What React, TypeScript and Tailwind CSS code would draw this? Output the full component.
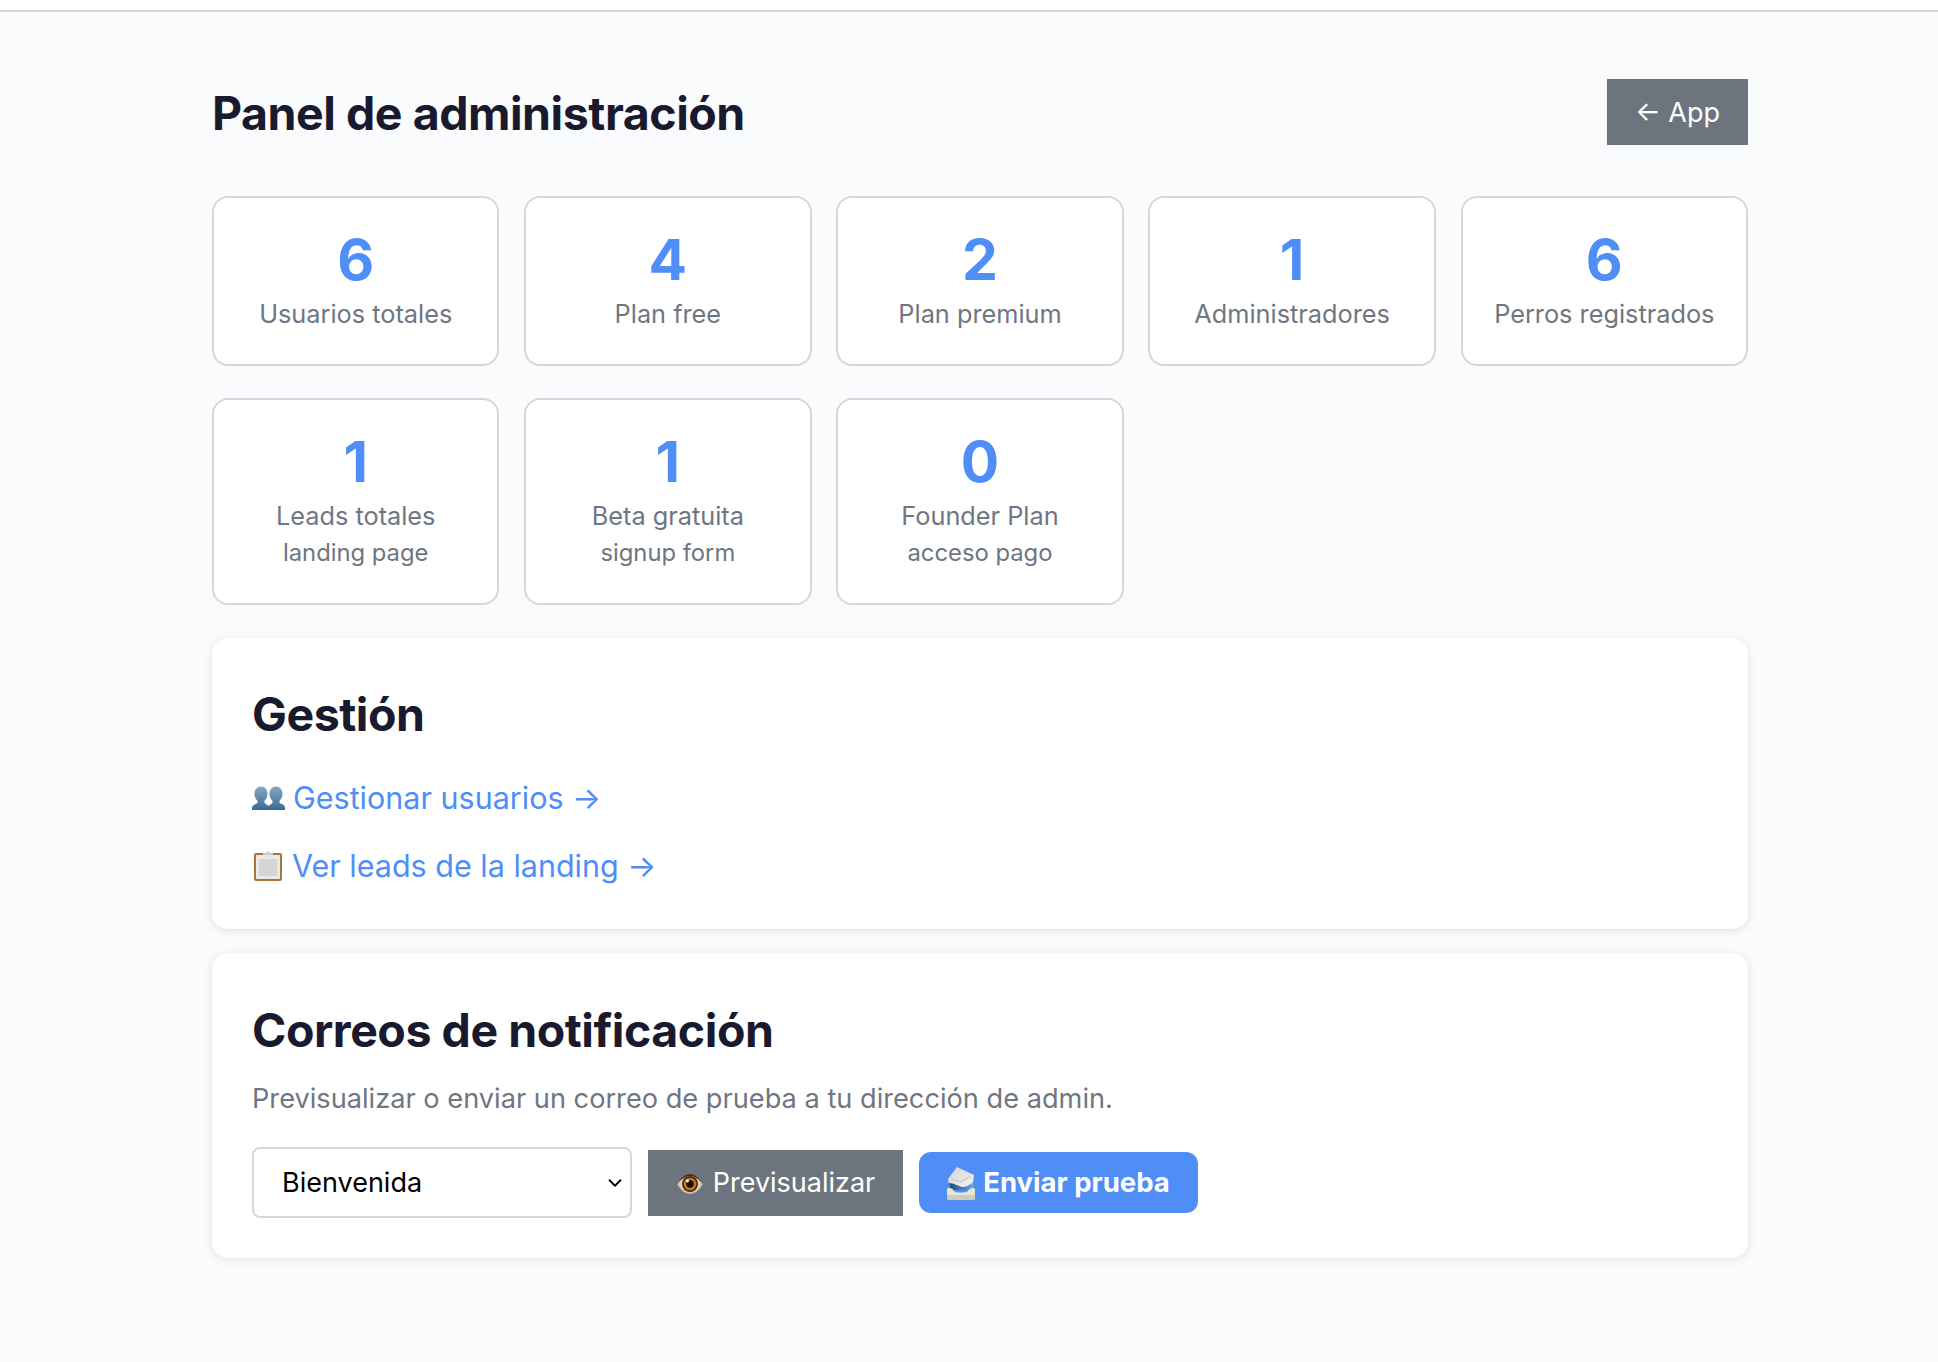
import { ChevronDown } from "lucide-react";

const stats = [
  { value: "6", label: "Usuarios totales" },
  { value: "4", label: "Plan free" },
  { value: "2", label: "Plan premium" },
  { value: "1", label: "Administradores" },
  { value: "6", label: "Perros registrados" },
  { value: "1", label: "Leads totales", sub: "landing page" },
  { value: "1", label: "Beta gratuita", sub: "signup form" },
  { value: "0", label: "Founder Plan", sub: "acceso pago" },
];

const PeopleIcon = () => (
  <svg width="33" height="26" viewBox="0 0 33 26" className="shrink-0">
    <defs>
      <linearGradient id="people" x1="0" y1="0" x2="0" y2="1">
        <stop offset="0" stopColor="#86a9c6" />
        <stop offset="1" stopColor="#3d6a92" />
      </linearGradient>
    </defs>
    <path
      d="M24 1.500c4 0 6.500 3.200 6.500 7.500 0 3-1.300 5.300-3 6.800v2.200c1.500.8 5.500 1.800 5.500 4.500V25H15v-2.500c1-2 4.500-3.500 5.500-4.500v-2.200c-1.700-1.500-3-3.800-3-6.800 0-4.300 2.500-7.500 6.500-7.500z"
      fill="url(#people)"
    />
    <path
      d="M9 1.500c4 0 6.500 3.200 6.500 7.500 0 3-1.300 5.300-3 6.800v2.200c1 1 4.500 2.500 5.500 4.500V25H0v-2.500c0-2.700 4-3.700 5.500-4.500v-2.200c-1.700-1.500-3-3.800-3-6.800 0-4.300 2.500-7.500 6.500-7.500z"
      fill="url(#people)"
    />
  </svg>
);

const ClipboardIcon = () => (
  <svg width="32" height="32" viewBox="0 0 32 32" className="shrink-0">
    <rect x="2" y="3" width="28" height="28" rx="2" fill="#a9743f" />
    <rect x="4" y="5" width="24" height="24" fill="#e8e8e8" />
    <rect x="7" y="9" width="18" height="17" fill="#d4d4d4" />
    <path d="M11 5V3h3l2-2 2 2h3v2z" fill="#c9ccd0" />
  </svg>
);

const EyeIcon = () => (
  <svg width="28" height="22" viewBox="0 0 28 22" className="shrink-0">
    <defs>
      <radialGradient id="sclera">
        <stop offset="0.5" stopColor="#f4eee8" />
        <stop offset="1" stopColor="#c9a9a0" />
      </radialGradient>
    </defs>
    <path d="M1 11C5 4 10 1 14 1s9 3 13 10c-4 7-9 10-13 10S5 18 1 11z" fill="url(#sclera)" />
    <path d="M1 11C5 4 10 1 14 1s9 3 13 10C23 6 18 3 14 3S5 6 1 11z" fill="#3d2c20" />
    <circle cx="14" cy="11" r="8" fill="#4a2d10" />
    <circle cx="14" cy="11" r="6.300" fill="#b9781c" />
    <circle cx="14" cy="11" r="3.700" fill="#1a0f07" />
    <circle cx="11.500" cy="8" r="1.400" fill="#ffffff" />
  </svg>
);

const MailIcon = () => (
  <svg width="28" height="34" viewBox="0 0 28 34" className="shrink-0">
    <defs>
      <linearGradient id="letter" x1="0" y1="0" x2="1" y2="1">
        <stop offset="0" stopColor="#d3d5d6" />
        <stop offset="1" stopColor="#f3f3f1" />
      </linearGradient>
      <linearGradient id="wave" x1="0" y1="0" x2="1" y2="0">
        <stop offset="0" stopColor="#1b4a7c" />
        <stop offset="1" stopColor="#6aa6d6" />
      </linearGradient>
    </defs>
    <path d="M1 13 10 1l17 8-2 15H3z" fill="url(#letter)" />
    <path d="M4 13 14 16 24 10" fill="none" stroke="#bfc3c6" strokeWidth="1" />
    <path d="M2 17c5 0 9 3 13 4 4 0 8-2 11-5l-1 8H3z" fill="url(#wave)" />
    <path d="M1 22c4 0 5 1 6 3 2 2 12 2 14 0 1-2 2-3 6-3l1 1v9a2 2 0 0 1-2 2H2a2 2 0 0 1-2-2v-9z" fill="#e6e3d8" />
    <path d="M0 29h28v3a2 2 0 0 1-2 2H2a2 2 0 0 1-2-2z" fill="#cfcbbd" />
  </svg>
);

const App = () => {
  return (
    <div className="min-h-[1362px] bg-[#fafbfd] font-['Inter',sans-serif] text-[#1a1a2e]">
      <div className="h-[12px] border-b-2 border-[#d6d7de] bg-white" />

      <main className="ml-[212px] w-[1536px] pt-[67px]">
        <header className="mb-[51px] flex items-center justify-between">
          <h1 className="pt-[2px] text-[46.500px] font-bold leading-none tracking-[-0.01em]">Panel de administración</h1>
          <a className="flex h-[66px] w-[141px] items-center justify-center bg-[#6c757d] pt-[2px] text-[27px] text-white">
            ← App
          </a>
        </header>

        <div className="mb-[33px] grid grid-cols-5 gap-x-[24.700px] gap-y-[32px]">
          {stats.map((stat, i) => (
            <div
              key={i}
              className="rounded-[16px] border-2 border-[#d6d7de] bg-white pt-[32px] pb-[32px] text-center"
            >
              <div className="text-[57px] font-bold leading-[60px] text-[#4f8ef7]">{stat.value}</div>
              <div className="mt-[5px] text-[25.300px] leading-[37px] text-[#6f7683]">{stat.label}</div>
              {stat.sub && <div className="text-[23.800px] leading-[37px] text-[#6f7683]">{stat.sub}</div>}
            </div>
          ))}
        </div>

        <section className="mb-[24px] rounded-[16px] bg-white px-[40px] pt-[48px] pb-[44px] shadow-[0_2px_10px_rgba(0,0,0,0.1)]">
          <h2 className="text-[46.500px] font-bold leading-[56px] tracking-[-0.01em]">Gestión</h2>
          <div className="mt-[37px] flex flex-col gap-[30px]">
            <a className="flex items-center gap-[8px] text-[30.500px] leading-[38px] text-[#4f8ef7]">
              <PeopleIcon />
              Gestionar usuarios →
            </a>
            <a className="flex items-center gap-[8px] text-[30.500px] leading-[38px] text-[#4f8ef7]">
              <ClipboardIcon />
              Ver leads de la landing →
            </a>
          </div>
        </section>

        <section className="rounded-[16px] bg-white px-[40px] pt-[49px] pb-[40px] shadow-[0_2px_10px_rgba(0,0,0,0.1)]">
          <h2 className="text-[46.500px] font-bold leading-[56px] tracking-[-0.01em]">Correos de notificación</h2>
          <p className="mt-[21px] text-[27.200px] leading-[40px] text-[#6f7683]">
            Previsualizar o enviar un correo de prueba a tu dirección de admin.
          </p>
          <div className="mt-[28px] flex items-center gap-[16px]">
            <div className="relative w-[380px]">
              <select className="h-[71px] w-full appearance-none rounded-[8px] border-2 border-[#d6d7de] bg-white pt-[2px] pl-[28px] text-[27px] text-black">
                <option>Bienvenida</option>
              </select>
              <ChevronDown className="absolute top-[25px] right-[6px] h-[22px] w-[22px] text-black" strokeWidth={2} />
            </div>
            <a className="flex h-[66px] w-[255px] items-center justify-center gap-[9px] bg-[#6c757d] pt-[2px] text-[27px] text-white">
              <EyeIcon />
              Previsualizar
            </a>
            <a className="flex h-[61px] w-[279px] items-center justify-center gap-[8px] rounded-[12px] bg-[#4f8ef7] text-[27.500px] font-bold text-white">
              <MailIcon />
              Enviar prueba
            </a>
          </div>
        </section>
      </main>
    </div>
  );
};

export default App;
